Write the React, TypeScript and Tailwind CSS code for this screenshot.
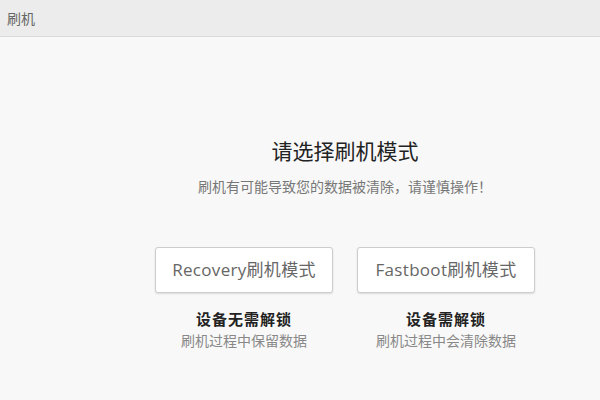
const font = { fontFamily: '"Open Sans", "Noto Sans CJK SC", sans-serif' }
const cjk = { fontFamily: '"Noto Sans CJK SC", sans-serif' }

function ModeOption({ label, title, desc }: { label: string; title: string; desc: string }) {
  return (
    <div className="flex w-[178px] flex-col items-center">
      <button className="h-[46px] w-full rounded-[3px] border border-[#cdcdcd] bg-white text-[17px] leading-[22px] tracking-[0.3px] text-[#666] shadow-[0_1px_2px_rgba(0,0,0,0.12)]">
        {label}
      </button>
      <div className="mt-[16px] text-[15px] font-bold leading-[20px] tracking-[1px] text-[#222]">{title}</div>
      <div className="mt-[2px] text-[14px] leading-[20px] text-[#888]">{desc}</div>
    </div>
  )
}

export default function App() {
  return (
    <div className="flex h-[400px] w-[600px] flex-col bg-[#f8f8f8]" style={font}>
      {/* Header */}
      <div className="flex h-[37px] shrink-0 items-center border-b border-[#dadada] bg-[#ececec] px-[7px]">
        <span className="text-[14px] text-[#666]">刷机</span>
      </div>

      {/* Body */}
      <div className="ml-[155px] flex w-[380px] flex-col items-center pt-[100px]">
        <h1 className="text-[21px] leading-[28px] text-[#222]">请选择刷机模式</h1>
        <p
          lang="zh-CN"
          className="mt-[11px] text-[14px] leading-[20px] text-[#777] [text-spacing-trim:space-all]"
          style={cjk}
        >
          刷机有可能导致您的数据被清除，请谨慎操作！
        </p>
        <div className="mt-[51px] flex gap-[24px]">
          <ModeOption label="Recovery刷机模式" title="设备无需解锁" desc="刷机过程中保留数据" />
          <ModeOption label="Fastboot刷机模式" title="设备需解锁" desc="刷机过程中会清除数据" />
        </div>
      </div>
    </div>
  )
}
